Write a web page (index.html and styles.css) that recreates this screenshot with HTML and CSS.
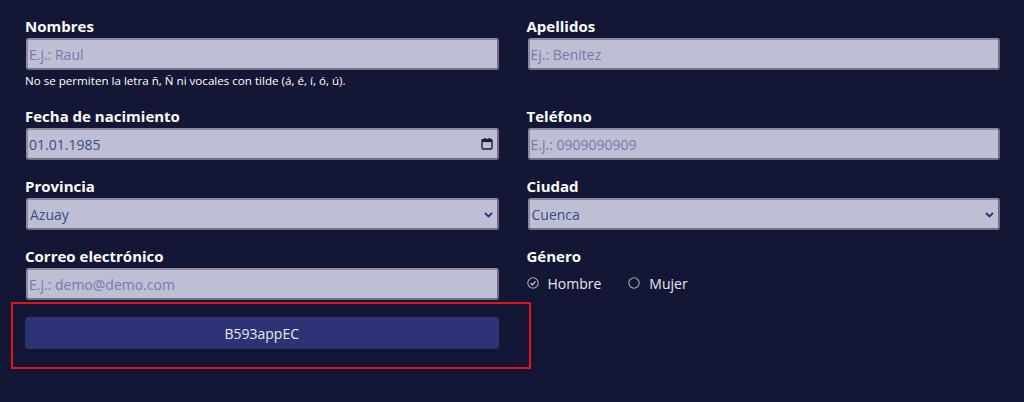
FILE: index.html
```html
<!DOCTYPE html>
<html lang="es">
<head>
<meta charset="utf-8">
<title>Registro</title>
<link rel="stylesheet" href="styles.css">
</head>
<body>
<form class="form">
  <div class="cell">
    <label class="label">Nombres</label>
    <div class="field"><input class="control" placeholder="E.j.: Raul"></div>
    <p class="help">No se permiten la letra ñ, Ñ ni vocales con tilde (á, é, í, ó, ú).</p>
  </div>
  <div class="cell">
    <label class="label">Apellidos</label>
    <div class="field"><input class="control" placeholder="Ej.: Benitez"></div>
  </div>

  <div class="cell">
    <label class="label">Fecha de nacimiento</label>
    <div class="field">
      <input class="control value" value="01.01.1985">
      <svg class="cal" width="12" height="12" viewBox="0 0 12 12"><rect x="1" y="1.5" width="10" height="9.5" rx="1.2" fill="none" stroke="#1e1f2a" stroke-width="1.4"/><rect x="1" y="1.5" width="10" height="2.6" fill="#1e1f2a"/><rect x="3" y="0" width="1.4" height="2" fill="#1e1f2a"/><rect x="7.6" y="0" width="1.4" height="2" fill="#1e1f2a"/></svg>
    </div>
  </div>
  <div class="cell">
    <label class="label">Teléfono</label>
    <div class="field"><input class="control" placeholder="E.j.: 0909090909"></div>
  </div>

  <div class="cell">
    <label class="label">Provincia</label>
    <div class="field">
      <select class="control value"><option>Azuay</option></select>
      <svg class="chev" width="9" height="6" viewBox="0 0 9 6"><path d="M1 1l3.5 3.5L8 1" fill="none" stroke="#2b3275" stroke-width="1.8"/></svg>
    </div>
  </div>
  <div class="cell">
    <label class="label">Ciudad</label>
    <div class="field">
      <select class="control value"><option>Cuenca</option></select>
      <svg class="chev" width="9" height="6" viewBox="0 0 9 6"><path d="M1 1l3.5 3.5L8 1" fill="none" stroke="#2b3275" stroke-width="1.8"/></svg>
    </div>
  </div>

  <div class="cell">
    <label class="label">Correo electrónico</label>
    <div class="field"><input class="control" placeholder="E.j.: demo@demo.com"></div>
  </div>
  <div class="cell">
    <label class="label">Género</label>
    <div class="radios">
      <span class="radio">
        <svg width="12" height="12" viewBox="0 0 12 12"><circle cx="6" cy="6" r="5.2" fill="none" stroke="#a9abbd" stroke-width="1.1"/><path d="M3.6 6.2l1.7 1.7 3.2-3.5" fill="none" stroke="#d8d9e6" stroke-width="1.2"/></svg>
        Hombre
      </span>
      <span class="radio">
        <svg width="12" height="12" viewBox="0 0 12 12"><circle cx="6" cy="6" r="5.2" fill="none" stroke="#a9abbd" stroke-width="1.1"/></svg>
        Mujer
      </span>
    </div>
  </div>

  <div class="highlight">
    <button type="button" class="btn">B593appEC</button>
  </div>
</form>
</body>
</html>
```

FILE: styles.css
```css
html, body {
  margin: 0;
  padding: 0;
  background: #131634;
  height: 402px;
  overflow: hidden;
}

body {
  font-family: "Open Sans", "DejaVu Sans", sans-serif;
  color: #ffffff;
}

.form {
  display: grid;
  grid-template-columns: 1fr 1fr;
  column-gap: 28px;
  row-gap: 16px;
  padding: 16px 24px 0 25px;
  align-items: start;
}

.cell {
  display: flex;
  flex-direction: column;
}

.label {
  font-size: 15px;
  font-weight: 700;
  line-height: 20px;
  margin-bottom: 2px;
  color: #ffffff;
}

.field {
  position: relative;
  display: flex;
  align-items: center;
  height: 32px;
  box-sizing: border-box;
  background: #bdbfd5;
  border: 2px solid #6f7083;
  border-top-color: #8b8c9f;
  border-left-color: #8b8c9f;
  border-radius: 3px;
  margin-left: 1px;
}

.control {
  flex: 1;
  min-width: 0;
  height: 100%;
  border: 0;
  outline: 0;
  background: transparent;
  padding: 0 0 0 1px;
  margin: 0;
  font-family: "Open Sans", "DejaVu Sans", sans-serif;
  font-size: 14px;
  color: #444a86;
  appearance: none;
  -webkit-appearance: none;
}

select.control {
  padding-left: 2px;
}

.control::placeholder {
  color: #767aa8;
}

.cal {
  margin: 0 4px 0 6px;
  flex: none;
}

.chev {
  position: absolute;
  right: 4px;
  top: 12px;
  pointer-events: none;
}

.help {
  margin: 2px 0 0 0;
  font-size: 11.6px;
  line-height: 18px;
  color: #ffffff;
}

.radios {
  display: flex;
  align-items: center;
  gap: 27px;
  margin-top: 5px;
  height: 20px;
}

.radio {
  display: flex;
  align-items: center;
  gap: 9px;
  font-size: 14px;
  color: #e6e7f1;
}

.highlight {
  margin: -14px -32px 0 -14px;
  padding: 13px 30px 18px 12px;
  border: 2px solid #e3151c;
}

.btn {
  display: block;
  width: 100%;
  height: 32px;
  border: 0;
  border-radius: 4px;
  background: #2c3273;
  color: #e8e8f3;
  font-family: "Open Sans", "DejaVu Sans", sans-serif;
  font-size: 14px;
}
```
